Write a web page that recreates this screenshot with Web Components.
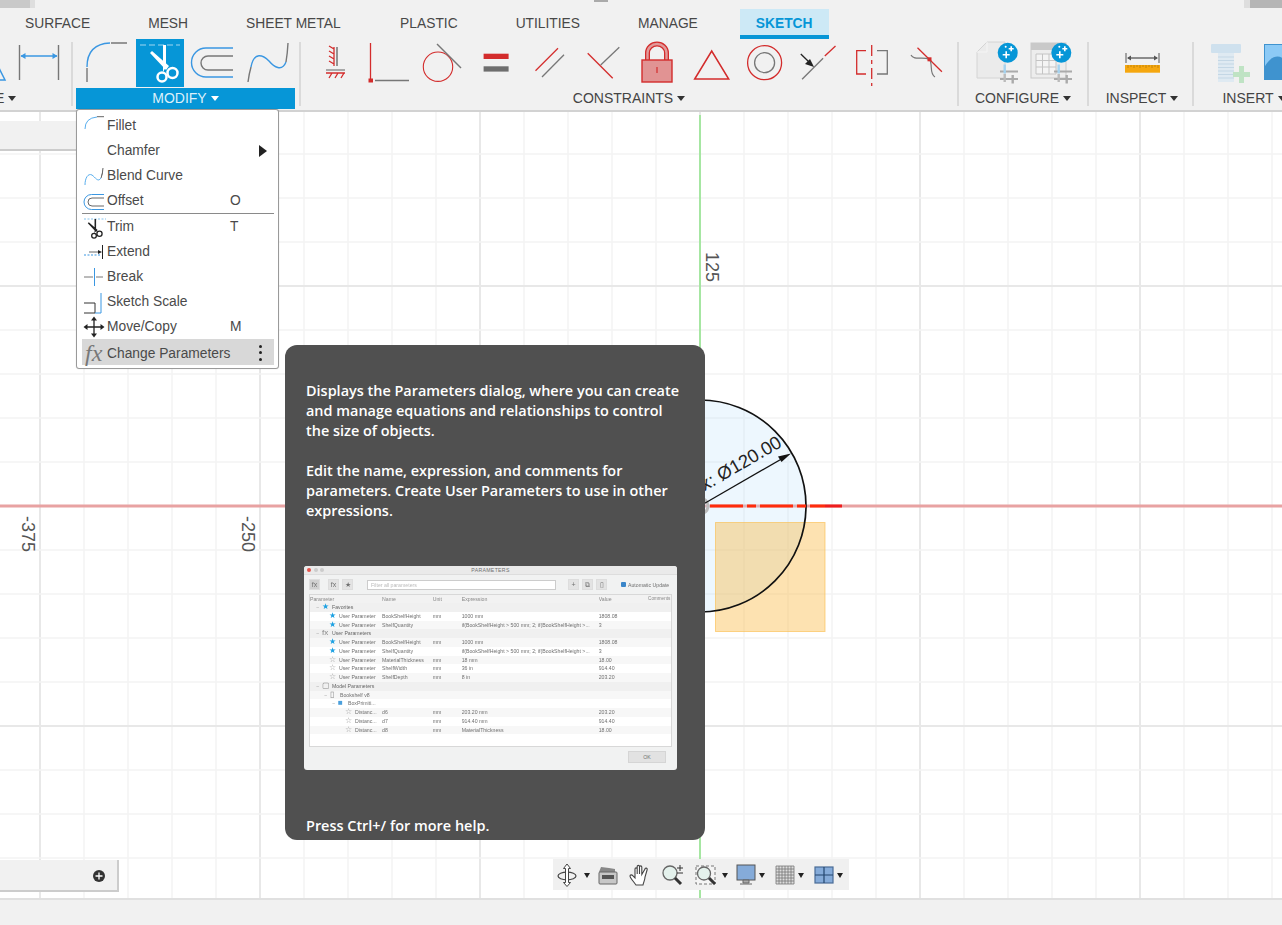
<!DOCTYPE html>
<html>
<head>
<meta charset="utf-8">
<title>Sketch - Change Parameters</title>
<style>
  html, body { margin: 0; padding: 0; background: #fff; overflow: hidden; }
</style>
</head>
<body>
<fusion-app></fusion-app>
<script>
const BLUE = '#3a97e2';
const GREY = '#777';
const RED = '#d32c2c';

const sparkle = (cx, cy) => `
  <circle cx="${cx}" cy="${cy}" r="10" fill="#0696d7"/>
  <path d="M${cx - 5} ${cy + 2}h7M${cx - 1.5} ${cy - 1.5}v7M${cx + 1} ${cy - 4}h5M${cx + 3.5} ${cy - 6.5}v5" stroke="#fff" stroke-width="1.6" fill="none"/>
  <circle cx="${cx - 2}" cy="${cy - 6}" r="1" fill="#fff"/>`;

const sliders = `
  <path d="M27 32.5h18M27 40h18" stroke="#aaa" stroke-width="2.2" fill="none"/>
  <rect x="30.5" y="25.5" width="2.4" height="9" fill="#a5d3f0"/>
  <rect x="30.5" y="35" width="2.4" height="8" fill="#bbb"/>
  <rect x="38.5" y="36" width="2.4" height="8.5" fill="#aaa"/>`;

const scissors = `
  <path d="M14 14l2-2 17 15-3 4zM27 6h3v22l-3 5z" fill="currentColor"/>
  <circle cx="26" cy="38" r="4.5" fill="none" stroke="currentColor" stroke-width="2.5"/>
  <circle cx="36.5" cy="34" r="5" fill="none" stroke="currentColor" stroke-width="2.5"/>`;

const ICONS = {
  corner: `<path d="M39 31l5 10H34z" fill="none" stroke="${BLUE}" stroke-width="1.5"/>`,
  dimension: `<path d="M4.5 6v35M43.5 6v35" stroke="${GREY}" stroke-width="1.4"/>
    <path d="M6 17h36" stroke="${BLUE}" stroke-width="1.4"/>
    <path d="M5.5 17l5-3v6zM42.5 17l-5-3v6z" fill="${BLUE}"/>`,
  fillet: `<path d="M5 29v14M29 4h16" stroke="${GREY}" stroke-width="1.4" fill="none"/>
    <path d="M5 28Q5 5 28 4" stroke="${BLUE}" stroke-width="1.4" fill="none"/>`,
  trim: `<path d="M4 6h40" stroke="#9fd6f2" stroke-width="1.2" stroke-dasharray="6 3" fill="none"/>
    <g color="#fff">${scissors}</g>`,
  offset: `<path d="M43 9H16a14.5 14.5 0 0 0 0 29h27" stroke="${BLUE}" stroke-width="1.4" fill="none"/>
    <path d="M43 17H18a6.5 6.5 0 0 0 0 14h25" stroke="${GREY}" stroke-width="1.4" fill="none"/>`,
  blend: `<path d="M5 43q1-8 3-15M43 23q1.500-9 2-19" stroke="${GREY}" stroke-width="1.4" fill="none"/>
    <path d="M8 28C11 12 20 16 26 22c5 6 13 11 17 1" stroke="${BLUE}" stroke-width="1.4" fill="none"/>`,
  fix: `<path d="M26 8v19" stroke="#555" stroke-width="1.2"/>
    <path d="M23 8v19M23 10l-5-3M23 15l-5-3M23 20l-5-3M23 25l-5-3" stroke="${RED}" stroke-width="1.3" fill="none"/>
    <path d="M15 31h19" stroke="${GREY}" stroke-width="1.2"/>
    <path d="M15 34h19M18 39l3-5M24 39l3-5M30 39l3-5" stroke="${RED}" stroke-width="1.3" fill="none"/>`,
  coincident: `<path d="M5.500 4v36" stroke="${RED}" stroke-width="1.3"/>
    <rect x="3.500" y="39.500" width="4.500" height="4" fill="${RED}"/>
    <path d="M10 41.500h34" stroke="${GREY}" stroke-width="1.6"/>`,
  tangent: `<circle cx="19" cy="27.700" r="14.700" fill="none" stroke="${RED}" stroke-width="1.1"/>
    <path d="M18 5l24 24" stroke="${GREY}" stroke-width="1.4"/>`,
  equal: `<rect x="11.600" y="14.700" width="25" height="5.300" fill="${RED}"/>
    <rect x="11.600" y="27.300" width="25" height="5.300" fill="#6e6e6e"/>`,
  parallel: `<path d="M9.500 31.700L32 9.300" stroke="${RED}" stroke-width="1.3"/>
    <path d="M16 38l22-22.300" stroke="${GREY}" stroke-width="1.3"/>`,
  perpendicular: `<path d="M7.700 14.300l25 25" stroke="${RED}" stroke-width="1.3"/>
    <path d="M20.700 26L39.300 8.300" stroke="${GREY}" stroke-width="1.3"/>`,
  lock: `<path d="M13.500 21v-7a9.500 9 0 0 1 19 0v7" fill="none" stroke="${RED}" stroke-width="5"/>
    <path d="M13.500 21v-7a9.500 9 0 0 1 19 0v7" fill="none" stroke="#e29a9a" stroke-width="2.400"/>
    <rect x="8" y="21" width="30" height="22" fill="#e19393" stroke="${RED}" stroke-width="1.400"/>
    <path d="M23 28v6" stroke="${RED}" stroke-width="1.200"/>`,
  triangle: `<path d="M6.700 40L23.700 12l17 28z" fill="none" stroke="${RED}" stroke-width="1.500"/>`,
  concentric: `<circle cx="23.600" cy="23.700" r="17" fill="none" stroke="${RED}" stroke-width="1.300"/>
    <circle cx="23.600" cy="23.700" r="10" fill="none" stroke="${GREY}" stroke-width="1.300"/>`,
  midpoint: `<path d="M7.100 40.300l21-21" stroke="${GREY}" stroke-width="1.300"/>
    <path d="M29.800 17L40.500 7" stroke="${RED}" stroke-width="1.300"/>
    <path d="M5.800 15L14 23" stroke="#222" stroke-width="1.300"/>
    <path d="M19 28l-9-3 5-5z" fill="#222"/>`,
  symmetry: `<path d="M22.700 6v41" stroke="${RED}" stroke-width="1.300" stroke-dasharray="11 4 4 4" fill="none"/>
    <path d="M17 11.700H7.700V35H17" stroke="${RED}" stroke-width="1.300" fill="none"/>
    <path d="M28 11.700h10.300V35H28" stroke="${GREY}" stroke-width="1.300" fill="none"/>`,
  curvature: `<path d="M14.500 8.700l24.400 24" stroke="${RED}" stroke-width="1.300"/>
    <path d="M8 16c3 6 12 1 18.500 4.500C30 25 26 35 32 38" stroke="${GREY}" stroke-width="1.200" fill="none"/>
    <rect x="24.500" y="18.300" width="4" height="4" fill="${RED}"/>`,
  config1: `<path d="M4 13L14 3h18v36H4z" fill="#ebebeb" stroke="#d4d4d4" stroke-width="1"/>
    <path d="M4 13h10V3" fill="none" stroke="#f5f5f5"/>${sparkle(34.700, 13.700)}${sliders}`,
  config2: `<rect x="4" y="4" width="35" height="35" fill="#ededed" stroke="#c9c9c9"/>
    <rect x="4" y="4" width="35" height="7" fill="#c9c9c9"/>
    <path d="M9 15h20v20H9zM9 21.500h20M9 28h20M15.500 15v20M22 15v20" fill="#f4f4f4" stroke="#c4c4c4"/>
    ${sparkle(34.300, 13.700)}${sliders}`,
  ruler: `<path d="M8 14v10M41 14v10" stroke="#555" stroke-width="1"/>
    <path d="M10 19h29" stroke="#555" stroke-width="1.300"/>
    <path d="M9 19l4-2.500v5zM40 19l-4-2.500v5z" fill="#555"/>
    <rect x="7" y="26" width="35" height="7.700" fill="#f5a70f"/>
    <path d="M10 26v3M13 26v2M16 26v3M19 26v2M22 26v3M25 26v2M28 26v3M31 26v2M34 26v3M37 26v2M40 26v3" stroke="#b97b06" stroke-width=".8"/>`,
  bolt: `<rect x="5" y="5" width="30" height="9" rx="1" fill="#cfe1ee"/>
    <rect x="12" y="14" width="16" height="29" fill="#dfeaf2"/>
    <path d="M12 18h16M12 21.500h16M12 25h16M12 28.500h16M12 32h16M12 35.500h16M12 39h16" stroke="#c4d7e5" stroke-width="1"/>
    <path d="M33 27h5v6h6v5h-6v6h-5v-6h-6v-5h6z" fill="#bfe3c4"/>`,
  picture: `<rect x="4.500" y="5.500" width="40" height="35" fill="#8ccaf6"/>
    <path d="M4.500 41V28c8-14 18-14 26 0v13z" fill="#3f93cf"/><path d="M30 41V28l15 2v11z" fill="#3f93cf"/>
    <rect x="4.500" y="5.500" width="40" height="35" fill="none" stroke="#3f93cf"/>`
};

const MENU_ICONS = {
  fillet: `<path d="M3 15Q3 4 15 3" stroke="#58aeee" fill="none"/><path d="M15 2.700h7" stroke="#666"/>`,
  blend: `<path d="M3 21C3 14 6 9 10 11c3 2 6 8 9 3" stroke="#58aeee" fill="none"/><path d="M19 14q1.500-3 2-10" stroke="#666"/>`,
  offset: `<path d="M22 5.500H9.500a7.500 7.500 0 0 0 0 15H22" stroke="#3a97e2" fill="none"/><path d="M22 9H10a4 4 0 0 0 0 8h12" stroke="#666" fill="none"/>`,
  trim: `<path d="M2 4h22" stroke="#86c4ee" stroke-dasharray="2 1.500"/><g transform="translate(-1.500 1) scale(.52)" color="#222">${scissors}</g>`,
  extend: `<path d="M2 15h16" stroke="#3a97e2" stroke-dasharray="2 1.500"/><path d="M7 12h11" stroke="#666"/><path d="M20 12l-4-2v4z" fill="#222"/><path d="M20.500 5v14" stroke="#222"/>`,
  break: `<path d="M2 12h9M14 12h7" stroke="#777"/><path d="M12.500 3v18" stroke="#3a97e2"/>`,
  scale: `<path d="M2 13h11v10H2" stroke="#333" fill="none"/><path d="M19 3v20h-6" stroke="#3a97e2" fill="none"/>`,
  move: `<path d="M12 3v18M3 12h18" stroke="#222" stroke-width="1.300"/><path d="M12 1.500l3 4H9zM12 22.500l3-4H9zM1.500 12l4-3v6zM22.500 12l-4-3v6z" fill="#222"/>`
};

const NAV_ICONS = {
  orbit: `<ellipse cx="12" cy="13" rx="9" ry="3.800" fill="none" stroke="#444" stroke-width="1.200"/>
    <path d="M12 1l3.500 4.500h-2v14h2L12 23.500 8.500 19.500h2v-14h-2z" fill="#fff" stroke="#444"/>`,
  look: `<path d="M3 9l2-5 8 1 6 1v3z" fill="#888"/><rect x="3" y="9" width="18" height="12" rx="1" fill="#c7c7c7" stroke="#666"/><rect x="6" y="12" width="12" height="4" fill="#555"/>`,
  hand: `<path d="M8 22C6 19 2 15 2 13c0-1.500 2-1.500 3 0l2 2V6c0-1.500 2.200-1.500 2.200 0v5V3.500c0-1.500 2.300-1.500 2.300 0V11V4c0-1.500 2.300-1.500 2.300 0v7.500L17 6c.3-1.500 2.500-1 2.200.5L17 14c0 3-1.500 5-2 8z" fill="#fff" stroke="#444" stroke-width="1.100"/>`,
  zoom: `<circle cx="10" cy="10" r="7" fill="#e4f1ec" stroke="#666" stroke-width="1.300"/><path d="M15 15l6 6" stroke="#333" stroke-width="3"/><path d="M17 5h6M20 2v6M17 10h6" stroke="#333" stroke-width="1"/>`,
  window: `<rect x="3" y="3" width="19" height="18" fill="#f4f4f4" stroke="#777" stroke-dasharray="3 2"/><circle cx="11" cy="10.500" r="6.500" fill="#e4f1ec" stroke="#666" stroke-width="1.300"/><path d="M16 15l6 6" stroke="#333" stroke-width="3"/>`,
  monitor: `<rect x="3" y="2" width="18" height="15" fill="#85abd9" stroke="#555"/><path d="M9 17h6v3H9zM6 21h12" fill="#aaa" stroke="#666"/>`,
  grid: `<path d="M3 3h18v18H3zM3 6h18M3 9h18M3 12h18M3 15h18M3 18h18M6 3v18M9 3v18M12 3v18M15 3v18M18 3v18" fill="#ddd" stroke="#777" stroke-width=".8"/>`,
  views: `<rect x="3" y="4" width="18" height="16" fill="#85abd9" stroke="#4a6c96" stroke-width="1.200"/><path d="M12 4v16M3 12h18" stroke="#24466e" stroke-width="1.200"/>`
};

class ToolIcon extends HTMLElement {
  connectedCallback() {
    const name = this.getAttribute('name');
    this.attachShadow({ mode: 'open' }).innerHTML = `
      <style>
        :host { display: block; width: 48px; height: 48px; flex: none; }
        :host([active]) { background: #0696d7; }
        svg { display: block; overflow: visible; }
      </style>
      <svg width="48" height="48" viewBox="0 0 48 48">${ICONS[name]}</svg>`;
  }
}

class RibbonPanel extends HTMLElement {
  connectedCallback() {
    this.attachShadow({ mode: 'open' }).innerHTML = `
      <style>
        :host { display: flex; flex-direction: column; flex: none; box-sizing: border-box; }
        .icons { display: flex; gap: 5.8px; height: 48px; padding: var(--pad, 0); justify-content: var(--justify, flex-start); }
        .label {
          margin-top: 1px; height: 21px; line-height: 21px; text-align: center;
          font-size: 14px; color: #444; white-space: nowrap; padding-left: var(--label-pad, 0);
        }
        .label i {
          display: inline-block; margin-left: 4px; vertical-align: 2px;
          border: 4px solid transparent; border-top: 5px solid #333; border-bottom: 0;
        }
        :host([open]) .label { background: #0696d7; color: #dcf0fa; }
        :host([open]) .label i { border-top-color: #fff; }
      </style>
      <div class="icons"><slot></slot></div>
      <div class="label">${this.getAttribute('label')}<i></i></div>`;
  }
}

class RibbonSep extends HTMLElement {
  connectedCallback() {
    this.attachShadow({ mode: 'open' }).innerHTML = `
      <style>
        :host { display: block; flex: none; width: 2px; height: 64px; margin-top: 3px; background: #dadada; }
      </style>`;
  }
}

class RibbonBar extends HTMLElement {
  connectedCallback() {
    this.attachShadow({ mode: 'open' }).innerHTML = `
      <style>
        :host {
          display: block; height: 112px; box-sizing: border-box; overflow: hidden;
          background: #f1f1f1; border-bottom: 2px solid #d2d2d2; font-family: "Liberation Sans", sans-serif;
        }
        .tabs { display: flex; gap: 26px; height: 39px; padding: 9px 0 0 9px; box-sizing: border-box; }
        .tab { padding: 2px 16px 0; height: 29px; line-height: 25px; box-sizing: border-box; font-size: 13.8px; color: #484848; white-space: nowrap; }
        .tab.on { background: #cde9f6; color: #0696d7; font-weight: bold; border-bottom: 4px solid #0696d7; height: 30px; }
        .row { display: flex; height: 71px; }
      </style>
      <div class="tabs">
        <div class="tab">SURFACE</div><div class="tab">MESH</div><div class="tab">SHEET METAL</div>
        <div class="tab" style="margin-left:1.500px">PLASTIC</div><div class="tab">UTILITIES</div><div class="tab">MANAGE</div>
        <div class="tab on">SKETCH</div>
      </div>
      <div class="row">
        <ribbon-panel label="CREATE" style="width:177px;margin-left:-106px;--justify:flex-end;--pad:0 8px 0 0">
          <tool-icon name="corner"></tool-icon><tool-icon name="dimension"></tool-icon>
        </ribbon-panel>
        <ribbon-sep></ribbon-sep>
        <ribbon-panel label="MODIFY" open style="width:219px;margin-left:3px;--pad:0 0 0 6px">
          <tool-icon name="fillet"></tool-icon><tool-icon name="trim" active></tool-icon>
          <tool-icon name="offset"></tool-icon><tool-icon name="blend"></tool-icon>
        </ribbon-panel>
        <ribbon-sep style="margin-left:4px"></ribbon-sep>
        <ribbon-panel label="CONSTRAINTS" style="width:656px;--pad:0 0 0 10px">
          <tool-icon name="fix"></tool-icon><tool-icon name="coincident"></tool-icon>
          <tool-icon name="tangent"></tool-icon><tool-icon name="equal"></tool-icon>
          <tool-icon name="parallel"></tool-icon><tool-icon name="perpendicular"></tool-icon>
          <tool-icon name="lock"></tool-icon><tool-icon name="triangle"></tool-icon>
          <tool-icon name="concentric"></tool-icon><tool-icon name="midpoint"></tool-icon>
          <tool-icon name="symmetry"></tool-icon><tool-icon name="curvature"></tool-icon>
        </ribbon-panel>
        <ribbon-sep></ribbon-sep>
        <ribbon-panel label="CONFIGURE" style="width:128px;--pad:0 0 0 14px">
          <tool-icon name="config1"></tool-icon><tool-icon name="config2"></tool-icon>
        </ribbon-panel>
        <ribbon-sep></ribbon-sep>
        <ribbon-panel label="INSPECT" style="width:103px;--pad:0 0 0 29px;--label-pad:3px">
          <tool-icon name="ruler"></tool-icon>
        </ribbon-panel>
        <ribbon-sep></ribbon-sep>
        <ribbon-panel label="INSERT" style="width:120px;--pad:0 0 0 12px">
          <tool-icon name="bolt"></tool-icon><tool-icon name="picture"></tool-icon>
        </ribbon-panel>
      </div>`;
  }
}

class SketchCanvas extends HTMLElement {
  connectedCallback() {
    let grid = '';
    for (let x = 40 - 44; x < 1282; x += 44) {
      const major = (x - 40) % 220 === 0;
      grid += `<path d="M${x} 112V898" stroke="${major ? '#e8e8e8' : '#f3f3f3'}" stroke-width="${major ? 2 : 1.5}"/>`;
    }
    for (let y = 506 - 44 * 9; y < 898; y += 44) {
      const major = (y - 286) % 220 === 0;
      grid += `<path d="M0 ${y}H1282" stroke="${major ? '#e8e8e8' : '#f3f3f3'}" stroke-width="${major ? 2 : 1.5}"/>`;
    }
    this.attachShadow({ mode: 'open' }).innerHTML = `
      <style>
        :host { display: block; height: 786px; background: #fff; position: relative; }
        svg { display: block; font-family: "Liberation Sans", sans-serif; }
      </style>
      <svg width="1282" height="786" viewBox="0 112 1282 786">
        ${grid}
        <path d="M0 506H1282" stroke="#e8a2a2" stroke-width="3"/>
        <path d="M700 115V898" stroke="#a6e6a2" stroke-width="2"/>
        <circle cx="700" cy="506" r="106" fill="rgba(190,226,250,.27)"/>
        <rect x="715.500" y="522.500" width="109.500" height="109" fill="rgba(250,186,70,.42)" stroke="rgba(250,186,70,.6)"/>
        <circle cx="700" cy="506" r="106" fill="none" stroke="#111" stroke-width="1.700"/>
        <path d="M710 506h33M747 506h9M760 506h33M797 506h9M810 506h15" stroke="#ff2c0c" stroke-width="3"/>
        <path d="M825 506h17" stroke="#ee1d1d" stroke-width="3"/>
        <circle cx="700" cy="506" r="8" fill="none" stroke="#bbb" stroke-width="3"/>
        <path d="M700 506L785 457" stroke="#111" stroke-width="1.300"/>
        <path d="M791 453.500l-13 3 3.500 5.500z" fill="#111"/>
        <text x="783" y="446" text-anchor="end" transform="rotate(-30 783 446)" font-size="18.500" fill="#222">Max: Ø120.00</text>
        <text transform="translate(706 252) rotate(90)" font-size="18" fill="#555">125</text>
        <text transform="translate(22 516) rotate(90)" font-size="18" fill="#555">-375</text>
        <text transform="translate(242 516) rotate(90)" font-size="18" fill="#555">-250</text>
      </svg>
      <slot></slot>`;
  }
}

class SidePanel extends HTMLElement {
  connectedCallback() {
    this.attachShadow({ mode: 'open' }).innerHTML = `
      <style>
        :host {
          position: absolute; left: 0; display: block; box-sizing: border-box;
          background: #f1f1f1; border-right: 2px solid #ccc; border-bottom: 2px solid #ccc;
        }
        svg { position: absolute; right: 11px; top: 9px; }
      </style>
      ${this.hasAttribute('plus') ? `<svg width="14" height="14" viewBox="0 0 14 14"><circle cx="7" cy="7" r="6" fill="#333"/><path d="M3.500 7h7M7 3.500v7" stroke="#fff" stroke-width="1.300"/></svg>` : ''}`;
  }
}

class NavBar extends HTMLElement {
  connectedCallback() {
    this.attachShadow({ mode: 'open' }).innerHTML = `
      <style>
        :host {
          position: absolute; left: 553px; top: 747px; width: 296px; height: 31px;
          display: flex; align-items: center; background: #f0f0f0; padding-left: 2px; box-sizing: border-box;
        }
      </style>
      <slot></slot>`;
  }
}

class NavIcon extends HTMLElement {
  connectedCallback() {
    const name = this.getAttribute('name');
    this.attachShadow({ mode: 'open' }).innerHTML = `
      <style>
        :host { display: block; flex: none; margin-left: ${this.getAttribute('gap') || 0}px; height: 24px; }
        svg { display: block; }
        div { width: 8px; }
        i { display: block; margin: 10px auto 0; border: 3.5px solid transparent; border-top: 5px solid #222; border-bottom: 0; width: 0; }
      </style>
      ${name === 'caret' ? '<div><i></i></div>' : `<svg width="24" height="24" viewBox="0 0 24 24">${NAV_ICONS[name]}</svg>`}`;
  }
}

class MenuItem extends HTMLElement {
  connectedCallback() {
    const icon = this.getAttribute('icon');
    const key = this.getAttribute('key') || '';
    let art = '';
    if (icon === 'fx') art = '<span class="fx">fx</span>';
    else if (icon) art = `<svg width="24" height="24" viewBox="0 0 24 24">${MENU_ICONS[icon]}</svg>`;
    let tail = '';
    if (this.hasAttribute('sub')) tail = '<i class="sub"></i>';
    if (this.hasAttribute('more')) tail = '<b class="more"><u></u><u></u><u></u></b>';
    this.attachShadow({ mode: 'open' }).innerHTML = `
      <style>
        :host {
          display: grid; grid-template-columns: 25px 123px 29px 1fr; align-items: center; height: 25px;
          color: #4a4a4a; font-size: 13.800px; white-space: nowrap;
        }
        :host([hot]) { background: #d8d8d8; height: 26px; padding-top: 3px; box-sizing: border-box; }
        svg { display: block; }
        .fx { font: italic 24px "Liberation Serif", serif; color: #777; padding-left: 3px; line-height: 20px; }
        .sub { display: block; width: 0; border: 6px solid transparent; border-left: 8px solid #222; border-right: 0; }
        .more { display: flex; flex-direction: column; gap: 3.500px; width: 3px; margin-left: 0; margin-top: -2px; }
        .more u { display: block; width: 3px; height: 3px; border-radius: 50%; background: #222; }
      </style>
      <div>${art}</div><div>${this.getAttribute('label')}</div><div>${key}</div><div>${tail}</div>`;
  }
}

class ModifyMenu extends HTMLElement {
  connectedCallback() {
    this.attachShadow({ mode: 'open' }).innerHTML = `
      <style>
        :host {
          position: absolute; left: 76px; top: 109px; width: 203px; box-sizing: border-box;
          display: block; padding: 3px 4px 3px 5px; background: #fff; border: 1px solid #9a9a9a;
          border-radius: 3px; font-family: "Liberation Sans", sans-serif;
          box-shadow: 0 0 1px rgba(0,0,0,.25);
        }
        hr { border: 0; border-top: 1px solid #8a8a8a; margin: 0; }
      </style>
      <menu-item icon="fillet" label="Fillet"></menu-item>
      <menu-item label="Chamfer" sub></menu-item>
      <menu-item icon="blend" label="Blend Curve"></menu-item>
      <menu-item icon="offset" label="Offset" key="O"></menu-item>
      <hr>
      <menu-item icon="trim" label="Trim" key="T"></menu-item>
      <menu-item icon="extend" label="Extend"></menu-item>
      <menu-item icon="break" label="Break"></menu-item>
      <menu-item icon="scale" label="Sketch Scale"></menu-item>
      <menu-item icon="move" label="Move/Copy" key="M"></menu-item>
      <menu-item icon="fx" label="Change Parameters" hot more></menu-item>`;
  }
}

const PARAM_ROWS = [
  { g: 1, pad: 12, exp: '−', icon: '★', c: '#1ba0e2', a: 'Favorites' },
  { pad: 19, icon: '★', c: '#1ba0e2', a: 'User Parameter', n: 'BookShelfHeight', u: 'mm', e: '1000 mm', v: '1808.08' },
  { pad: 19, icon: '★', c: '#1ba0e2', a: 'User Parameter', n: 'ShelfQuantity', e: 'if(BookShelfHeight > 500 mm; 2; if(BookShelfHeight >...', v: '3' },
  { g: 1, pad: 12, exp: '−', icon: 'fx', c: '#888', a: 'User Parameters' },
  { pad: 19, icon: '★', c: '#1ba0e2', a: 'User Parameter', n: 'BookShelfHeight', u: 'mm', e: '1000 mm', v: '1808.08' },
  { pad: 19, icon: '★', c: '#1ba0e2', a: 'User Parameter', n: 'ShelfQuantity', e: 'if(BookShelfHeight > 500 mm; 2; if(BookShelfHeight >...', v: '3' },
  { pad: 19, icon: '☆', c: '#999', a: 'User Parameter', n: 'MaterialThickness', u: 'mm', e: '18 mm', v: '18.00' },
  { pad: 19, icon: '☆', c: '#999', a: 'User Parameter', n: 'ShelfWidth', u: 'mm', e: '36 in', v: '914.40' },
  { pad: 19, icon: '☆', c: '#999', a: 'User Parameter', n: 'ShelfDepth', u: 'mm', e: '8 in', v: '203.20' },
  { g: 1, pad: 12, exp: '−', icon: '▢', c: '#888', a: 'Model Parameters' },
  { pad: 20, exp: '−', icon: '▯', c: '#888', a: 'Bookshelf v8' },
  { pad: 28, exp: '−', icon: '■', c: '#4a9fdc', a: 'BoxPrimiti...' },
  { pad: 35, icon: '☆', c: '#999', a: 'Distanc...', n: 'd6', u: 'mm', e: '203.20 mm', v: '203.20' },
  { pad: 35, icon: '☆', c: '#999', a: 'Distanc...', n: 'd7', u: 'mm', e: '914.40 mm', v: '914.40' },
  { pad: 35, icon: '☆', c: '#999', a: 'Distanc...', n: 'd8', u: 'mm', e: 'MaterialThickness', v: '18.00' }
];

class ParamsPreview extends HTMLElement {
  connectedCallback() {
    const rows = PARAM_ROWS.map((r, i) => `
      <div class="r ${r.g ? 'g' : (i % 2 ? 'w' : 'o')}">
        <span style="padding-left:${r.pad}px"><em>${r.exp || ''}</em><b style="color:${r.c}">${r.icon}</b>${r.a}</span>
        <span>${r.n || ''}</span><span>${r.u || ''}</span><span>${r.e || ''}</span><span>${r.v || ''}</span><span></span>
      </div>`).join('');
    this.attachShadow({ mode: 'open' }).innerHTML = `
      <style>
        :host {
          display: block; width: 373px; height: 204px; box-sizing: border-box; margin-left: -2px;
          background: #f1f2f2; border-radius: 3px; overflow: hidden; position: relative;
          font: 5.200px "Liberation Sans", sans-serif; color: #707070; filter: blur(.5px);
        }
        .title { height: 8px; background: #eaeaea; text-align: center; line-height: 8px; border-bottom: 1px solid #ddd; position: relative; letter-spacing: .3px; }
        .title u { position: absolute; top: 2px; width: 4px; height: 4px; border-radius: 50%; background: #ccc; }
        .tools { display: flex; align-items: center; height: 19px; padding-left: 5px; gap: 3px; }
        .btn { width: 9px; height: 9px; background: #e3e3e3; border: 1px solid #ddd; font-size: 7px; line-height: 9px; text-align: center; }
        .filter { width: 184px; height: 8px; margin-left: 11px; background: #fff; border: 1px solid #ccc; line-height: 8px; padding-left: 3px; color: #bbb; }
        .auto { margin-left: 11px; display: flex; align-items: center; gap: 2px; white-space: nowrap; }
        .auto i { width: 5px; height: 5px; background: #3b86c9; border-radius: 1px; }
        .table { margin: 0 5px; height: 153px; background: #fff; border: 1px solid #d8d8d8; box-sizing: border-box; width: 363px; }
        .r { display: grid; grid-template-columns: 72px 50.700px 29px 137px 49.400px 1fr; height: 8.750px; line-height: 8.750px; white-space: nowrap; overflow: hidden; }
        .r span { overflow: hidden; }
        .h { background: #f2f2f2; height: 8px; line-height: 8px; color: #888; }
        .h span:last-child { font-size: 4.600px; }
        .g { background: #f0f0f0; color: #666; }
        .w { background: #fff; }
        .o { background: #f7f7f7; }
        em { font-style: normal; display: inline-block; width: 0; margin-left: -6px; margin-right: 6px; color: #999; }
        b { font-weight: normal; display: inline-block; width: 10px; font-size: 8px; }
        .foot { position: absolute; right: 11px; bottom: 7px; width: 36px; height: 10px; background: #e2e2e2; border: 1px solid #d5d5d5; line-height: 10px; text-align: center; }
      </style>
      <div class="title"><u style="left:3px;background:#e5534b"></u><u style="left:10px"></u><u style="left:16px"></u>PARAMETERS</div>
      <div class="tools">
        <div class="btn" style="background:#d0d0d0">fx</div><div class="btn" style="margin-left:5px">fx</div><div class="btn">★</div>
        <div class="filter">Filter all parameters</div>
        <div class="btn" style="margin-left:9px">+</div><div class="btn">⧉</div><div class="btn">▯</div>
        <div class="auto"><i></i>Automatic Update</div>
      </div>
      <div class="table">
        <div class="r h"><span>Parameter</span><span>Name</span><span>Unit</span><span>Expression</span><span>Value</span><span>Comments</span></div>
        ${rows}
      </div>
      <div class="foot">OK</div>`;
  }
}

class HelpTooltip extends HTMLElement {
  connectedCallback() {
    this.attachShadow({ mode: 'open' }).innerHTML = `
      <style>
        :host {
          position: absolute; left: 285px; top: 345px; width: 420px; height: 495px; box-sizing: border-box;
          display: block; padding: 36px 19px 0 21px; background: #505050; border-radius: 12px;
          color: #fff; font: 600 14.450px/20px "Open Sans", sans-serif;
        }
        p { margin: 0 0 20px; white-space: nowrap; }
        .gap { height: 45px; }
        .gap.low { height: 46px; }
      </style>
      <p><slot name="first"></slot></p>
      <p style="margin:0"><slot name="second"></slot></p>
      <div class="gap"></div>
      <slot name="preview"></slot>
      <div class="gap low"></div>
      <slot name="foot"></slot>`;
  }
}

class FusionApp extends HTMLElement {
  connectedCallback() {
    this.attachShadow({ mode: 'open' }).innerHTML = `
      <style>
        :host { display: block; position: relative; width: 1282px; height: 925px; overflow: hidden; background: #fff; }
        .status { height: 27px; box-sizing: border-box; background: #f1f1f1; border-top: 2px solid #e0e0e0; }
        .chip { position: absolute; top: 0; height: 8px; background: #c9c9c9; }
      </style>
      <ribbon-bar></ribbon-bar>
      <sketch-canvas>
        <side-panel style="top:9px;width:150px;height:30px"></side-panel>
        <side-panel plus style="top:748px;width:119px;height:32px"></side-panel>
        <nav-bar>
          <nav-icon name="orbit"></nav-icon><nav-icon name="caret" gap="4"></nav-icon>
          <nav-icon name="look" gap="5"></nav-icon><nav-icon name="hand" gap="8"></nav-icon>
          <nav-icon name="zoom" gap="8"></nav-icon><nav-icon name="window" gap="9"></nav-icon>
          <nav-icon name="caret" gap="3.500"></nav-icon><nav-icon name="monitor" gap="5.500"></nav-icon>
          <nav-icon name="caret" gap="0"></nav-icon><nav-icon name="grid" gap="7"></nav-icon>
          <nav-icon name="caret" gap="0"></nav-icon><nav-icon name="views" gap="7"></nav-icon>
          <nav-icon name="caret" gap="0"></nav-icon>
        </nav-bar>
      </sketch-canvas>
      <div class="status"></div>
      <div class="chip" style="left:0;width:30px"></div>
      <div class="chip" style="left:30px;width:5px;background:#dedede"></div>
      <div class="chip" style="left:594px;width:14px;height:2px;background:#aaa"></div>
      <div class="chip" style="left:1244px;width:6px;background:#dedede"></div>
      <div class="chip" style="left:1250px;width:32px;background:#b5b5b5"></div>
      <modify-menu></modify-menu>
      <help-tooltip>
        <span slot="first">Displays the Parameters dialog, where you can create<br>and manage equations and relationships to control<br>the size of objects.</span>
        <span slot="second">Edit the name, expression, and comments for<br>parameters. Create User Parameters to use in other<br>expressions.</span>
        <params-preview slot="preview"></params-preview>
        <span slot="foot">Press Ctrl+/ for more help.</span>
      </help-tooltip>`;
  }
}

customElements.define('tool-icon', ToolIcon);
customElements.define('ribbon-panel', RibbonPanel);
customElements.define('ribbon-sep', RibbonSep);
customElements.define('ribbon-bar', RibbonBar);
customElements.define('sketch-canvas', SketchCanvas);
customElements.define('side-panel', SidePanel);
customElements.define('nav-bar', NavBar);
customElements.define('nav-icon', NavIcon);
customElements.define('menu-item', MenuItem);
customElements.define('modify-menu', ModifyMenu);
customElements.define('params-preview', ParamsPreview);
customElements.define('help-tooltip', HelpTooltip);
customElements.define('fusion-app', FusionApp);
</script>
</body>
</html>
